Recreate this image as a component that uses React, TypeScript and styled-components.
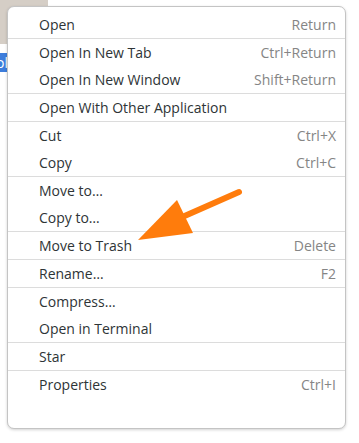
import React from "react";
import styled, { createGlobalStyle } from "styled-components";

const GlobalStyle = createGlobalStyle`
  html, body {
    margin: 0;
    padding: 0;
    background: #ffffff;
  }
  body {
    font-family: "Open Sans", "Noto Sans", sans-serif;
  }
`;

const Page = styled.div`
  position: relative;
  width: 359px;
  height: 443px;
  overflow: hidden;
  background: #ffffff;
`;

const Desktop = styled.div`
  display: flex;
  flex-direction: column;
  align-items: flex-start;
`;

const Thumbnail = styled.div`
  width: 48px;
  height: 44px;
  background: #d5cec6;
`;

const SelectedName = styled.div`
  margin-top: 9px;
  width: 60px;
  height: 19px;
  background: #3d7ddb;
  color: #ffffff;
  font-size: 14px;
  line-height: 19px;
  white-space: nowrap;
  overflow: hidden;
  text-indent: -4px;
`;

const Menu = styled.div`
  position: absolute;
  left: 7px;
  top: 6px;
  width: 337px;
  height: 417px;
  box-sizing: content-box;
  padding: 4px 0 0;
  background: #ffffff;
  border: 1px solid #c4c4c4;
  border-radius: 7px;
  box-shadow: 0 1px 3px rgba(0, 0, 0, 0.18);
  display: flex;
  flex-direction: column;
`;

const Section = styled.div<{ $first?: boolean }>`
  display: flex;
  flex-direction: column;
  border-top: ${props => (props.$first ? "none" : "1px solid #dcdcdc")};
`;

const Item = styled.div`
  display: flex;
  align-items: center;
  justify-content: space-between;
  height: 27px;
  padding: 0 9px 0 31px;
  font-size: 14px;
  color: #2e3436;
`;

const Shortcut = styled.span`
  color: #858585;
`;

const Arrow = styled.svg`
  position: absolute;
  left: 0;
  top: 0;
  pointer-events: none;
`;

type Entry = { label: string; key?: string };

const sections: Entry[][] = [
  [{ label: "Open", key: "Return" }],
  [
    { label: "Open In New Tab", key: "Ctrl+Return" },
    { label: "Open In New Window", key: "Shift+Return" },
  ],
  [{ label: "Open With Other Application" }],
  [
    { label: "Cut", key: "Ctrl+X" },
    { label: "Copy", key: "Ctrl+C" },
  ],
  [{ label: "Move to…" }, { label: "Copy to…" }],
  [{ label: "Move to Trash", key: "Delete" }],
  [{ label: "Rename…", key: "F2" }],
  [{ label: "Compress…" }, { label: "Open in Terminal" }],
  [{ label: "Star" }],
  [{ label: "Properties", key: "Ctrl+I" }],
];

export default function App() {
  return (
    <Page>
      <GlobalStyle />
      <Desktop>
        <Thumbnail />
        <SelectedName>olders</SelectedName>
      </Desktop>
      <Menu>
        {sections.map((section, i) => (
          <Section key={i} $first={i === 0}>
            {section.map(entry => (
              <Item key={entry.label}>
                <span>{entry.label}</span>
                {entry.key && <Shortcut>{entry.key}</Shortcut>}
              </Item>
            ))}
          </Section>
        ))}
      </Menu>
      <Arrow width="359" height="443" viewBox="0 0 359 443">
        <line x1="239" y1="192" x2="180" y2="218" stroke="#ff7c0c" strokeWidth="6" strokeLinecap="round" />
        <polygon points="138,240 177,200 193,233" fill="#ff7c0c" />
      </Arrow>
    </Page>
  );
}
